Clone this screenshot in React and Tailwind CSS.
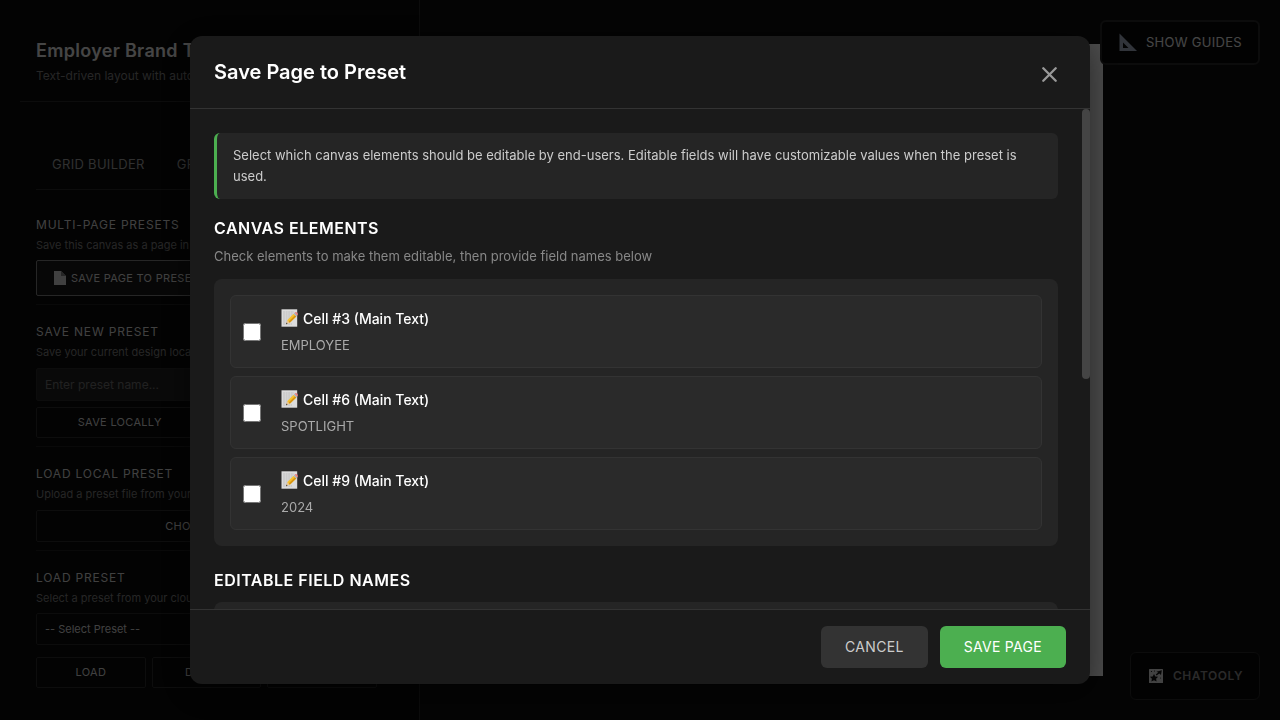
import React from "react";

const sectionTitle = "text-xs leading-4 font-normal uppercase tracking-[0.8px] text-[#d8d8d8]";
const sectionNote = "mt-1 text-[11px] leading-4 text-[#808080] whitespace-nowrap";
const sideButton = "rounded-xs border border-[#2d2d2d] text-[11px] uppercase tracking-[0.3px] text-[#d8d8d8]";

function MemoIcon() {
  return (
    <svg viewBox="0 0 18 18" className="mb-0.5 h-[18px] w-[18px] shrink-0" aria-hidden="true">
      <rect x="0.5" y="0.3" width="15.7" height="17.4" fill="#dcdcdc" />
      <path d="M2 3h11M2 5h10M2 7h9M2 9h7M2 11h5M2 13h5M2 15h9" stroke="#b4b4b4" strokeWidth="0.8" strokeDasharray="2 0.6" />
      <path d="M5 15.2 6.2 11.2 8.8 13.8Z" fill="#e9c690" />
      <path d="M5 15.2 5.5 13.5 6.6 14.7Z" fill="#333" />
      <path d="M6.2 11.2 12.6 4.8 15.3 7.5 8.8 13.8Z" fill="#f6c12e" />
      <path d="M7.6 12.6 14 6.2 15.3 7.5 8.8 13.8Z" fill="#d99512" />
      <path d="M12.6 4.8 13.6 3.8 16.3 6.5 15.3 7.5Z" fill="#a9b4bb" />
      <path d="M13.6 3.8Q14.8 2.4 16.4 3.8 17.6 5.2 16.3 6.5Z" fill="#e78080" />
    </svg>
  );
}

function Sidebar() {
  return (
    <aside className="min-h-screen w-[420px] shrink-0 border-r border-[#282828] bg-[#0a0a0a] px-5 pt-10">
      <header className="border-b border-[#282828] px-4 pb-[17px]">
        <h1 className="text-lg leading-[22px] font-semibold tracking-[0.3px] text-[#e8e8e8]">Employer Brand Tool</h1>
        <p className="mt-[5px] text-xs leading-[17px] text-[#808080]">Text-driven layout with auto-sizing</p>
      </header>
      <div className="pr-[22px] pl-4">
        <nav className="mt-9 flex border-b border-[#282828] pt-0.5 pl-4">
          <button className="mr-8 h-[49px] text-[13px] uppercase tracking-[0.3px] text-[#a0a0a0]">Grid Builder</button>
          <button className="h-[49px] text-[13px] uppercase tracking-[0.3px] text-[#a0a0a0]">Graphics</button>
        </nav>
        <section className="mt-[27px] border-b border-[#202020] pb-2">
          <h2 className={sectionTitle}>Multi-Page Presets</h2>
          <p className={sectionNote}>Save this canvas as a page in a multi-page preset</p>
          <button className="mt-[7px] flex h-9 w-full items-center gap-1 rounded-xs border border-[#808080] bg-[#1a1a1a] px-4 text-[11px] uppercase tracking-[0.3px] text-[#d8d8d8]">
            <svg viewBox="0 0 14 16" className="h-4 w-3.5" aria-hidden="true">
              <path d="M1 1h7l5 5v9H1Z" fill="#d8d8d8" />
              <path d="M8 1v5h5Z" fill="#808080" />
            </svg>
            Save Page to Preset
          </button>
        </section>
        <section className="mt-[19px] border-b border-[#202020] pb-2">
          <h2 className={sectionTitle}>Save New Preset</h2>
          <p className={sectionNote}>Save your current design locally or to the cloud</p>
          <input
            aria-label="Preset name"
            placeholder="Enter preset name..."
            className="mt-2 h-[33px] w-full rounded-xs border border-[#282828] bg-[#202020] px-2 text-xs placeholder:text-[#707070]"
          />
          <div className="mt-1.5 grid grid-cols-2 gap-1.5">
            <button className={`${sideButton} h-[31px]`}>Save Locally</button>
            <button className={`${sideButton} h-[31px]`}>Save to Cloud</button>
          </div>
        </section>
        <section className="mt-[19px] border-b border-[#202020] pb-2">
          <h2 className={sectionTitle}>Load Local Preset</h2>
          <p className={sectionNote}>Upload a preset file from your computer</p>
          <button className={`${sideButton} mt-2 h-8 w-full`}>Choose Files</button>
        </section>
        <section className="mt-[19px]">
          <h2 className={sectionTitle}>Load Preset</h2>
          <p className={sectionNote}>Select a preset from your cloud library</p>
          <select
            aria-label="Preset"
            className="mt-[7px] block h-8 w-full appearance-none rounded-xs border border-[#282828] bg-transparent px-2 text-[11px] text-[#d8d8d8]"
          >
            <option>-- Select Preset --</option>
          </select>
          <div className="mt-3 grid grid-cols-3 gap-1.5">
            <button className={`${sideButton} h-[31px]`}>Load</button>
            <button className={`${sideButton} h-[31px]`}>Delete</button>
            <button className={`${sideButton} h-[31px]`}>Refresh</button>
          </div>
        </section>
      </div>
    </aside>
  );
}

function ElementRow({ id, value }) {
  return (
    <label className="flex items-center gap-5 rounded-md border border-[#333] bg-[#2a2a2a] p-3">
      <input type="checkbox" className="h-[18px] w-[18px] shrink-0" />
      <span className="flex flex-col gap-[5px]">
        <span className="flex h-[22px] items-center gap-1 text-sm leading-[22px] font-medium text-white">
          <MemoIcon />
          {`Cell #${id} (Main Text)`}
        </span>
        <span className="text-[13px] leading-5 text-[#aaa]">{value}</span>
      </span>
    </label>
  );
}

const elements = [
  { id: 3, value: "EMPLOYEE" },
  { id: 6, value: "SPOTLIGHT" },
  { id: 9, value: "2024" },
];

const heading = "text-base leading-[19px] font-semibold uppercase tracking-[0.5px] text-white";

function PresetDialog() {
  return (
    <div role="dialog" aria-modal="true" aria-labelledby="dialog-title" className="flex h-[90vh] w-full max-w-[900px] flex-col overflow-hidden rounded-xl bg-[#1a1a1a] shadow-[0_8px_32px_rgba(0,0,0,0.5)]">
      <header className="flex h-[73px] shrink-0 items-center justify-between border-b border-[#333] px-6">
        <h2 id="dialog-title" className="text-xl font-semibold text-white">Save Page to Preset</h2>
        <button aria-label="Close" className="flex h-8 w-8 items-center justify-center text-[#999]">
          <svg viewBox="0 0 16 18" className="mt-1 h-[18px] w-4" fill="none" stroke="currentColor" strokeWidth="2.3" strokeLinecap="round" aria-hidden="true">
            <path d="M1.3 3.3 13.7 15.7M13.7 3.3 1.3 15.7" />
          </svg>
        </button>
      </header>
      <div className="flex min-h-0 flex-1">
        <div className="min-w-0 flex-1 overflow-hidden px-6 pt-6">
          <p className="rounded-md border-l-3 border-[#4caf50] bg-[#252525] px-4 py-3 text-[13px] leading-[21px] text-[#ccc]">
            Select which canvas elements should be editable by end-users. Editable fields will have customizable values when the preset is used.
          </p>
          <h3 className={`${heading} mt-5`}>Canvas Elements</h3>
          <p className="mt-2 text-[13px] leading-[21px] text-[#888]">Check elements to make them editable, then provide field names below</p>
          <div className="mt-3 flex flex-col gap-2 rounded-lg bg-[#252525] p-4">
            {elements.map((item) => (
              <ElementRow key={item.id} {...item} />
            ))}
          </div>
          <h3 className={`${heading} mt-[25px]`}>Editable Field Names</h3>
          <div className="mt-3 h-24 rounded-lg bg-[#252525]" />
        </div>
        <div className="w-2 shrink-0">
          <div className="h-[270px] rounded bg-[#444]" />
        </div>
      </div>
      <footer className="flex shrink-0 justify-end gap-3 border-t border-[#333] px-6 py-4">
        <button className="h-[42px] rounded-md bg-[#333] px-6 text-sm uppercase tracking-[0.3px] text-[#ccc]">Cancel</button>
        <button className="h-[42px] rounded-md bg-[#4caf50] px-6 text-sm uppercase tracking-[0.3px] text-white">Save Page</button>
      </footer>
    </div>
  );
}

export default function App() {
  return (
    <div className="flex h-screen overflow-hidden bg-[#0f0f0f] font-['Inter',sans-serif]">
      <Sidebar />
      <main className="flex flex-1 justify-center py-11">
        <div className="w-[506px] bg-white" />
      </main>
      <button className="fixed top-5 right-5 flex h-[45px] items-center gap-2 rounded-md border-2 border-[#282828] bg-[#080808] px-4 text-[13px] uppercase tracking-[0.3px] text-[#e8e8e8]">
        <svg viewBox="0 0 20 20" className="h-5 w-5" aria-hidden="true">
          <path d="M1.5 0.5V18H19ZM5 9.5 10.5 15H5Z" fill="#a4aec4" fillRule="evenodd" />
        </svg>
        Show Guides
      </button>
      <a href="#chatooly" className="fixed right-5 bottom-5 flex h-12 items-center gap-2 rounded-md border border-[#282828] bg-[#080808] px-4 text-xs font-semibold uppercase tracking-[0.5px] text-[#8c8c8c]">
        <svg viewBox="0 0 16 16" className="mx-px h-4 w-4" aria-hidden="true">
          <rect x="1" y="1" width="14" height="14" rx="0.6" fill="#ddd" />
          <path d="m6 6 1.3 2.5 2.8.2-2 2 .5 2.8L6 12.2l-2.6 1.3.5-2.8-2-2 2.8-.2ZM13.8 2.2 13 7l-1.7-1.4-2.7 2-.8-1 2.4-2-1.8-.9Z" fill="#111" />
          <circle cx="3.5" cy="3.5" r="0.6" fill="#111" />
          <circle cx="6.5" cy="3" r="0.5" fill="#111" />
          <circle cx="12.6" cy="10" r="0.5" fill="#111" />
        </svg>
        Chatooly
      </a>
      <div className="fixed inset-0 z-10 flex items-center justify-center bg-black/70">
        <PresetDialog />
      </div>
    </div>
  );
}
